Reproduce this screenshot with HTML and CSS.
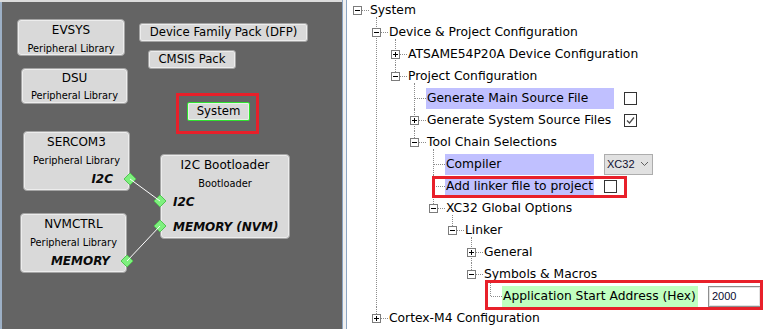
FILE: index.html
```html
<!DOCTYPE html>
<html>
<head>
<meta charset="utf-8">
<link rel="stylesheet" href="styles.css">
</head>
<body>
<div class="canvas">
  <div class="nbox n-evsys"><div class="n-title">EVSYS</div><div class="n-sub">Peripheral Library</div></div>
  <div class="pill n-dfp">Device Family Pack (DFP)</div>
  <div class="pill n-cmsis">CMSIS Pack</div>
  <div class="nbox n-dsu"><div class="n-title">DSU</div><div class="n-sub">Peripheral Library</div></div>
  <div class="annot a-system"></div>
  <div class="pill n-system">System</div>
  <div class="nbox n-sercom"><div class="n-title">SERCOM3</div><div class="n-sub">Peripheral Library</div><div class="n-port right">I2C</div></div>
  <div class="nbox n-boot"><div class="n-title">I2C Bootloader</div><div class="n-sub">Bootloader</div><div class="n-port left">I2C</div><div class="n-port left second">MEMORY (NVM)</div></div>
  <div class="nbox n-nvm"><div class="n-title">NVMCTRL</div><div class="n-sub">Peripheral Library</div><div class="n-port right">MEMORY</div></div>
  <svg class="wires" width="342" height="329" viewBox="0 0 342 329">
    <g fill="#7ef07e" stroke="#52c452" stroke-width="1">
      <polygon points="130,173 136,179 130,185 124,179"/>
      <polygon points="160,195 166,201 160,207 154,201"/>
      <polygon points="160,220 166,226 160,232 154,226"/>
      <polygon points="127,255 133,261 127,267 121,261"/>
    </g>
    <g stroke="#ffffff" stroke-width="1">
      <line x1="130" y1="179" x2="160" y2="201"/>
      <line x1="127" y1="261" x2="160" y2="226"/>
    </g>
  </svg>
</div>
<div class="divider"></div>
<div class="panel">
<ul class="tree">
<li class="root">
  <div class="row"><span class="lead"><span class="tog"></span><span class="dash"></span></span><span class="lbl">System</span></div>
  <ul>
    <li>
      <div class="row"><span class="lead"><span class="tog"></span><span class="dash"></span></span><span class="lbl">Device &amp; Project Configuration</span></div>
      <ul>
        <li>
          <div class="row"><span class="lead"><span class="tog plus"></span><span class="dash"></span></span><span class="lbl">ATSAME54P20A Device Configuration</span></div>
        </li>
        <li>
          <div class="row"><span class="lead"><span class="tog"></span><span class="dash"></span></span><span class="lbl">Project Configuration</span></div>
          <ul>
            <li>
              <div class="row"><span class="lead"><span class="stub"></span><span class="dash"></span></span><span class="lbl hl-blue w188">Generate Main Source File</span><span class="chk"></span></div>
            </li>
            <li>
              <div class="row"><span class="lead"><span class="tog plus"></span><span class="dash"></span></span><span class="lbl w188">Generate System Source Files</span><span class="chk"><svg width="11" height="11" viewBox="0 0 11 11"><polyline points="2,5.5 4.5,8 9,2.5" fill="none" stroke="#4a4a4a" stroke-width="1.3"/></svg></span></div>
            </li>
            <li>
              <div class="row"><span class="lead"><span class="tog"></span><span class="dash"></span></span><span class="lbl">Tool Chain Selections</span></div>
              <ul>
                <li>
                  <div class="row"><span class="lead"><span class="stub"></span><span class="dash"></span></span><span class="lbl hl-blue w149">Compiler</span><span class="combo"><span class="combo-txt">XC32</span><svg width="9" height="6" viewBox="0 0 9 6"><polyline points="1,1 4.5,4.5 8,1" fill="none" stroke="#606060" stroke-width="1"/></svg></span></div>
                </li>
                <li>
                  <div class="row"><span class="lead"><span class="stub"></span><span class="dash"></span></span><span class="lbl hl-blue w149">Add linker file to project</span><span class="chk"></span><span class="annot a-linker"></span></div>
                </li>
                <li>
                  <div class="row"><span class="lead"><span class="tog"></span><span class="dash"></span></span><span class="lbl">XC32 Global Options</span></div>
                  <ul>
                    <li>
                      <div class="row"><span class="lead"><span class="tog"></span><span class="dash"></span></span><span class="lbl">Linker</span></div>
                      <ul>
                        <li>
                          <div class="row"><span class="lead"><span class="tog plus"></span><span class="dash"></span></span><span class="lbl">General</span></div>
                        </li>
                        <li>
                          <div class="row"><span class="lead"><span class="tog"></span><span class="dash"></span></span><span class="lbl">Symbols &amp; Macros</span></div>
                          <ul>
                            <li>
                              <div class="row"><span class="lead"><span class="stub"></span><span class="dash"></span></span><span class="lbl hl-green w196">Application Start Address (Hex)</span><span class="txtin">2000</span><span class="annot a-app"></span></div>
                            </li>
                          </ul>
                        </li>
                      </ul>
                    </li>
                  </ul>
                </li>
              </ul>
            </li>
          </ul>
        </li>
      </ul>
    </li>
    <li>
      <div class="row"><span class="lead"><span class="tog plus"></span><span class="dash"></span></span><span class="lbl">Cortex-M4 Configuration</span></div>
    </li>
  </ul>
</li>
</ul>
</div>
</body>
</html>
```

FILE: styles.css
```css
* { box-sizing: border-box; }
html, body { margin: 0; padding: 0; }
body {
  width: 763px;
  height: 329px;
  overflow: hidden;
  display: flex;
  background: #ffffff;
  color: #000000;
  font-family: "DejaVu Sans", sans-serif;
}

/* ---------- left canvas ---------- */
.canvas {
  position: relative;
  flex: none;
  width: 342px;
  height: 329px;
  background: #646464;
  box-shadow: inset 0 2px 0 #dcdcdc, inset 2px 0 0 #9db0c6;
}
.nbox, .pill {
  position: absolute;
  background: #d9d9d9;
  border: 1px solid #a4a4a4;
  border-radius: 4px;
  box-shadow: inset 0 0 0 1px #ededed;
  font-size: 11.7px;
  color: #000;
  text-align: center;
}
.pill { line-height: 17px; border-radius: 3px; }
.n-title { line-height: 20px; font-size: 12px; }
.n-sub { font-size: 9.8px; line-height: 18px; }
.n-port {
  font-weight: bold;
  font-style: italic;
  font-size: 12px;
  line-height: 18px;
  color: #0a0a0a;
}
.n-port.right { text-align: right; padding-right: 16px; }
.n-port.left { text-align: left; padding-left: 12px; }
.n-port.second { margin-top: 7px; }

.n-evsys { left: 17px; top: 19px; width: 108px; height: 37px; }
.n-dsu { left: 21px; top: 68px; width: 107px; height: 36px; }
.n-dsu .n-title { line-height: 18px; }
.n-dfp { left: 139px; top: 23px; width: 169px; height: 19px; }
.n-cmsis { left: 148px; top: 50px; width: 88px; height: 19px; }
.n-system {
  left: 187px; top: 102px; width: 63px; height: 19px;
  border: 1px solid #2ee02e;
  border-radius: 2px;
  box-shadow: inset 0 0 0 1px #e4f4e4;
}
.n-sercom { left: 23px; top: 131px; width: 107px; height: 60px; }
.n-boot { left: 160px; top: 154px; width: 130px; height: 85px; }
.n-nvm { left: 20px; top: 213px; width: 107px; height: 60px; }

.wires { position: absolute; left: 0; top: 0; }

.annot {
  position: absolute;
  border: 3px solid #e8202a;
  z-index: 2;
}
.a-system { left: 176px; top: 93px; width: 83px; height: 41px; }

/* ---------- divider ---------- */
.divider {
  flex: none;
  width: 5px;
  background: #f0f0f0;
  border-left: 1px solid #8ba5c3;
  border-right: 1px solid #8ba5c3;
}

/* ---------- tree ---------- */
.panel {
  flex: 1;
  padding-left: 6px;
  overflow: hidden;
  font-size: 12.3px;
}
.tree, .tree ul {
  list-style: none;
  margin: 0;
  padding: 0;
}
.tree { margin-top: -1px; }
.tree ul { padding-left: 19px; }
.tree li { position: relative; }
.tree li:not(.root)::before {
  content: "";
  position: absolute;
  left: 4px;
  top: 0;
  bottom: 0;
  border-left: 1px dotted #8c8c8c;
}
.tree li:not(.root):first-child::before { top: -4px; }
.tree li:not(.root):last-child::before { bottom: auto; height: 11px; }
.tree li:not(.root):first-child:last-child::before { height: 15px; }

.row {
  position: relative;
  display: flex;
  align-items: center;
  height: 22px;
  white-space: nowrap;
}
.lead {
  flex: none;
  width: 16px;
  display: flex;
  align-items: center;
  position: relative;
  z-index: 1;
}
.tog {
  flex: none;
  position: relative;
  width: 9px;
  height: 9px;
  border: 1px solid #7c7c7c;
  background: #ffffff;
}
.tog::before {
  content: "";
  position: absolute;
  left: 1px;
  top: 3px;
  width: 5px;
  height: 1px;
  background: #000;
}
.tog.plus::after {
  content: "";
  position: absolute;
  left: 3px;
  top: 1px;
  width: 1px;
  height: 5px;
  background: #000;
}
.stub { flex: none; width: 5px; }
.dash {
  flex: 1;
  height: 0;
  border-top: 1px dotted #8c8c8c;
}
.lbl {
  flex: none;
  padding: 0 1px;
  height: 21px;
  line-height: 21px;
}
.hl-blue { background: #c0c0ff; }
.hl-green { background: #c0ffc0; }
.w188 { width: 188px; }
.w149 { width: 149px; }
.w196 { width: 196px; }

.chk {
  flex: none;
  margin-left: 10px;
  width: 13px;
  height: 13px;
  border: 1px solid #333333;
  background: #ffffff;
  display: flex;
  align-items: center;
  justify-content: center;
}
.combo {
  flex: none;
  margin-left: 10px;
  width: 49px;
  height: 21px;
  background: #e1e1e1;
  border: 1px solid #adadad;
  display: flex;
  align-items: center;
  justify-content: space-between;
  padding: 0 3px 0 2px;
  font-family: "Liberation Sans", sans-serif;
  font-size: 11px;
}
.combo-txt { color: #101030; }
.txtin {
  flex: none;
  margin-left: 10px;
  width: 53px;
  height: 21px;
  border: 1px solid #8e8e8e;
  box-shadow: inset 0 0 0 1px #e2e2e2;
  background: #ffffff;
  padding-left: 3px;
  line-height: 19px;
  font-family: "Liberation Sans", sans-serif;
  font-size: 11px;
  color: #0a0a30;
}
.a-linker { left: 3px; top: 1px; width: 195px; height: 22px; }
.a-app { left: -1px; top: -5px; width: 278px; height: 30px; }
```
